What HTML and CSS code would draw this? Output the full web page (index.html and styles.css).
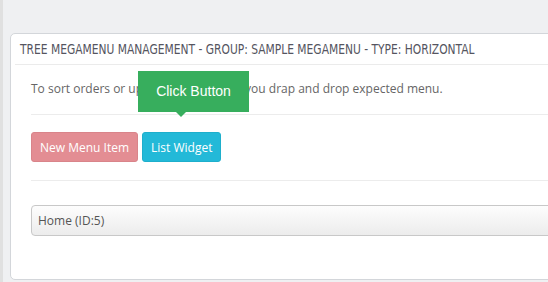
FILE: index.html
```html
<!DOCTYPE html>
<html lang="en">
<head>
<meta charset="UTF-8" />
<title>Tree Megamenu Management</title>
<link rel="stylesheet" href="styles.css">
</head>
<body>
<div class="page">
  <div class="panel">
    <div class="panel-heading"><span>TREE MEGAMENU MANAGEMENT - GROUP: SAMPLE MEGAMENU - TYPE: HORIZONTAL</span></div>
    <div class="panel-body">
      <p class="hint">To sort orders or update parent-child, you drap and drop expected menu.</p>
      <hr>
      <div class="actions">
        <button class="btn btn-new">New Menu Item</button>
        <button class="btn btn-widget">List Widget</button>
        <div class="tip">Click Button</div>
      </div>
      <hr class="sep">
      <div class="menu-item">Home (ID:5)</div>
    </div>
  </div>
</div>
</body>
</html>
```

FILE: styles.css
```css
* { box-sizing: border-box; }
html, body {
  margin: 0; padding: 0; height: 100%;
  background: #eff0f2;
  overflow: hidden;
  font-family: "Open Sans", sans-serif;
}

.page {
  height: 100%;
  border-left: 3px solid #e0e0e0;
  padding: 33px 0 0 7px;
}

.panel {
  width: 580px;
  height: 247px;
  background: #fff;
  border: 1px solid #d3d6da;
  border-radius: 5px;
  padding: 0 4px;
}

.panel-heading {
  height: 31px;
  line-height: 31px;
  padding-left: 5px;
  border-bottom: 1px solid #ebebeb;
  font-family: "DejaVu Sans Condensed", "DejaVu Sans", sans-serif;
  font-stretch: condensed;
  font-size: 14px;
  color: #55555f;
  white-space: nowrap;
}

.panel-heading span {
  display: inline-block;
  transform: scaleX(0.85);
  transform-origin: left center;
}

.panel-body {
  padding: 15px 0 0 16px;
}

.hint {
  margin: 0;
  line-height: 18px;
  font-size: 12px;
  color: #666;
}

hr {
  margin: 16px 0 17px;
  border: 0;
  border-top: 1px solid #ececec;
}

hr.sep {
  margin: 18px 0 24px;
}

.actions {
  position: relative;
  display: flex;
  gap: 4px;
}

.btn {
  height: 30px;
  padding: 0 8px;
  border: 1px solid transparent;
  border-radius: 3px;
  font-family: "Open Sans", sans-serif;
  font-size: 12px;
  color: #fff;
}

.btn-new { background: #e38d93; border-color: #d9848a; }
.btn-widget { background: #23b9d8; border-color: #1eafcc; }

.tip {
  position: absolute;
  left: 107px;
  top: -61px;
  width: 111px;
  height: 41px;
  line-height: 41px;
  text-align: center;
  background: #37ae5d;
  color: #fff;
  font-family: "Liberation Sans", Arial, sans-serif;
  font-size: 14px;
}

.tip::after {
  content: "";
  position: absolute;
  left: 38px;
  bottom: -5px;
  border-left: 5px solid transparent;
  border-right: 5px solid transparent;
  border-top: 5px solid #37ae5d;
}

.menu-item {
  height: 31px;
  line-height: 29px;
  padding-left: 6px;
  border: 1px solid #c8c8c8;
  border-radius: 4px;
  background: linear-gradient(#fdfdfd, #ececec);
  font-size: 12px;
  color: #555;
}
```
